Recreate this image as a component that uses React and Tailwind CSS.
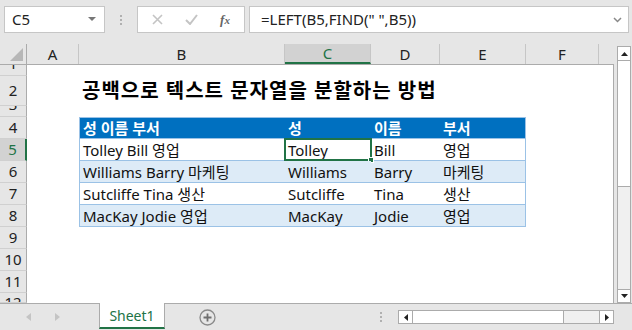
import React from 'react';

const FONT = { fontFamily: '"Noto Sans", "Noto Sans CJK KR", sans-serif' };

const rowHeights = [11, 30, 11, 22, 22, 22, 22, 22, 22, 22, 22, 10];

const tableRows = [
    ['Tolley Bill 영업', 'Tolley', 'Bill', '영업'],
    ['Williams Barry 마케팅', 'Williams', 'Barry', '마케팅'],
    ['Sutcliffe Tina 생산', 'Sutcliffe', 'Tina', '생산'],
    ['MacKay Jodie 영업', 'MacKay', 'Jodie', '영업'],
];

const COLS = 'grid grid-cols-[27px_52px_206px_86px_69px_86px_73px_1fr] grid-rows-[100%]';

const FormulaBar = () => (
    <div className="h-[44px] bg-[#e6e6e6] flex items-start pt-[6px] pl-[4px] pr-[3px]">
        <div className="w-[101px] h-[27px] bg-white border border-[#c6c6c6] flex items-center justify-between pl-[7px] pr-[8px]">
            <span className="text-[15px] text-[#222]">C5</span>
            <svg width="8" height="5" viewBox="0 0 8 5"><path d="M0 0h8L4 4z" fill="#777" /></svg>
        </div>
        <div className="w-[32px] h-[27px] flex flex-col items-center justify-center gap-[2px]">
            <span className="w-[2px] h-[2px] bg-[#b0b0b0]" />
            <span className="w-[2px] h-[2px] bg-[#b0b0b0]" />
            <span className="w-[2px] h-[2px] bg-[#b0b0b0]" />
        </div>
        <div className="w-[108px] h-[27px] bg-white border border-[#c6c6c6] flex items-center">
            <div className="w-[38px] flex justify-center">
                <svg width="11" height="11" viewBox="0 0 11 11"><path d="M1 1l9 9M10 1l-9 9" stroke="#c4c4c4" strokeWidth="1.6" /></svg>
            </div>
            <div className="w-[30px] flex justify-center">
                <svg width="13" height="11" viewBox="0 0 13 11"><path d="M1 6l4 4 7-9" stroke="#c4c4c4" strokeWidth="2" fill="none" /></svg>
            </div>
            <div className="w-[38px] flex justify-center">
                <span className="text-[13px] italic font-bold text-[#666]" style={{ fontFamily: '"Liberation Serif", serif' }}>f<span className="text-[11px]">x</span></span>
            </div>
        </div>
        <div className="w-[4px]" />
        <div className="flex-1 h-[27px] bg-white border border-[#c6c6c6] flex items-center justify-between pl-[11px] pr-[6px]">
            <span className="text-[15px] text-[#222]">=LEFT(B5,FIND(" ",B5))</span>
            <svg width="9" height="6" viewBox="0 0 9 6"><path d="M1 1l3.5 3.5L8 1" stroke="#888" strokeWidth="1.5" fill="none" /></svg>
        </div>
    </div>
);

const ColumnHeaders = () => (
    <div className={`${COLS} h-[21px] shrink-0 bg-[#e6e6e6] text-[15px] leading-[20px] text-[#222] border-b border-[#ababab]`}>
        <div className="border-r border-[#ababab] flex items-end justify-end p-[3px]">
            <svg width="13" height="13" viewBox="0 0 13 13"><path d="M13 0v13H0z" fill="#b7b7b7" /></svg>
        </div>
        {['A', 'B', 'C', 'D', 'E', 'F'].map((c) => (
            <div
                key={c}
                className={`flex items-center justify-center border-r border-[#c6c6c6] ${c === 'C' ? 'bg-[#d2d2d2] text-[#217346] border-b-2 border-b-[#217346]' : ''}`}
            >
                {c}
            </div>
        ))}
        <div />
    </div>
);

const Cell = ({ children, className = '' }) => (
    <div className={`flex items-center pl-[3px] whitespace-nowrap overflow-visible ${className}`}>{children}</div>
);

const SheetRow = ({ index, height }) => {
    const n = index + 1;
    const selected = n === 5;
    const header = n === 4;
    const data = n >= 5 && n <= 8 ? tableRows[n - 5] : null;
    const banded = n === 6 || n === 8;
    const inTable = n >= 4 && n <= 8;
    const tBg = header ? 'bg-[#0070c0] text-white font-bold' : banded ? 'bg-[#ddebf7]' : 'bg-white';
    const tBorder = inTable ? `border-b border-[#9bc2e6] ${header ? 'border-t' : ''}` : '';

    return (
        <div className={`${COLS} shrink-0 text-[15px] leading-[20px] text-[#111]`} style={{ height }}>
            <div
                className={`flex items-center justify-center overflow-hidden leading-none border-b border-[#d0d0d0] ${selected ? 'bg-[#d2d2d2] text-[#217346] border-r-2 border-r-[#217346]' : 'bg-[#e6e6e6] text-[#222] border-r border-r-[#ababab]'}`}
            >
                <span className={n === 1 || n === 3 ? 'text-[15px] -mt-[14px]' : n === 12 ? 'text-[15px] mt-[10px]' : 'text-[15px]'}>{n}</span>
            </div>
            <div className="bg-white" />
            {n === 2 && (
                <Cell className="col-span-4 bg-white text-[20px] leading-[28px] tracking-[1px] font-bold text-black">공백으로 텍스트 문자열을 분할하는 방법</Cell>
            )}
            {inTable && (
                <>
                    <Cell className={`${tBg} ${tBorder} border-l border-l-[#9bc2e6]`}>{header ? '성 이름 부서' : data[0]}</Cell>
                    <Cell className={`${tBg} ${tBorder} relative`}>
                        {header ? '성' : data[1]}
                        {selected && (
                            <div className="absolute -top-[1px] -left-[1px] right-[-1px] bottom-[-1px] border-2 border-[#217346]">
                                <div className="absolute -right-[4px] -bottom-[4px] w-[6px] h-[6px] bg-[#217346] border border-white" />
                            </div>
                        )}
                    </Cell>
                    <Cell className={`${tBg} ${tBorder}`}>{header ? '이름' : data[2]}</Cell>
                    <Cell className={`${tBg} ${tBorder} border-r border-r-[#9bc2e6]`}>{header ? '부서' : data[3]}</Cell>
                </>
            )}
            {!inTable && n !== 2 && <div className="col-span-4 bg-white" />}
            <div className="bg-white" />
            <div className="bg-white border-r border-[#ababab]" />
        </div>
    );
};

const VerticalScroll = () => (
    <div className="w-[18px] bg-[#e6e6e6] pl-[3px] pr-[1px] pt-[2px] flex flex-col">
        <div className="flex-1 flex flex-col border border-[#ababab] bg-[#f0f0f0]">
            <div className="h-[14px] bg-white border-b border-[#ababab] flex items-center justify-center">
                <svg width="7" height="4" viewBox="0 0 7 4"><path d="M0 4h7L3.5 0z" fill="#222" /></svg>
            </div>
            <div className="h-[126px] bg-white border-b border-[#ababab]" />
            <div className="flex-1" />
            <div className="h-[13px] bg-white border-t border-[#ababab] flex items-center justify-center">
                <svg width="7" height="4" viewBox="0 0 7 4"><path d="M0 0h7L3.5 4z" fill="#222" /></svg>
            </div>
        </div>
    </div>
);

const BottomBar = () => (
    <div className="h-[27px] bg-[#e6e6e6] border-t border-[#ababab] flex items-start">
        <div className="w-[99px] h-full flex items-center">
            <svg className="ml-[26px]" width="5" height="8" viewBox="0 0 5 8"><path d="M5 0v8L0 4z" fill="#c4c4c4" /></svg>
            <svg className="ml-[24px]" width="5" height="8" viewBox="0 0 5 8"><path d="M0 0v8l5-4z" fill="#c4c4c4" /></svg>
        </div>
        <div className="w-[66px] h-[26px] -mt-[1px] bg-white border-x border-[#ababab] border-b-2 border-b-[#217346] flex items-center justify-center text-[14px] text-[#217346]">
            Sheet1
        </div>
        <div className="w-[84px] h-full flex items-center justify-center">
            <svg width="17" height="17" viewBox="0 0 17 17">
                <circle cx="8.5" cy="8.5" r="7.5" fill="none" stroke="#8a8a8a" strokeWidth="1.3" />
                <path d="M8.5 4.5v8M4.5 8.5h8" stroke="#6f6f6f" strokeWidth="1.8" />
            </svg>
        </div>
        <div className="flex-1 h-full flex items-center justify-end pr-[18px]">
            <div className="flex flex-col gap-[2px] mr-[16px]">
                <span className="w-[2px] h-[2px] bg-[#b0b0b0]" />
                <span className="w-[2px] h-[2px] bg-[#b0b0b0]" />
                <span className="w-[2px] h-[2px] bg-[#b0b0b0]" />
            </div>
            <div className="w-[216px] h-[14px] border border-[#ababab] bg-[#f0f0f0] flex">
                <div className="w-[14px] bg-white border-r border-[#ababab] flex items-center justify-center">
                    <svg width="4" height="7" viewBox="0 0 4 7"><path d="M4 0v7L0 3.5z" fill="#222" /></svg>
                </div>
                <div className="w-[151px] bg-white border-r border-[#ababab]" />
                <div className="flex-1" />
                <div className="w-[14px] bg-white border-l border-[#ababab] flex items-center justify-center">
                    <svg width="4" height="7" viewBox="0 0 4 7"><path d="M0 0v7l4-3.5z" fill="#222" /></svg>
                </div>
            </div>
        </div>
    </div>
);

export default function App() {
    return (
        <div className="w-[632px] h-[330px] overflow-hidden bg-[#e6e6e6] flex flex-col" style={FONT}>
            <FormulaBar />
            <div className="flex h-[259px]">
                <div className="w-[614px] flex flex-col overflow-hidden">
                    <ColumnHeaders />
                    {rowHeights.map((h, i) => (
                        <SheetRow key={i} index={i} height={h} />
                    ))}
                </div>
                <VerticalScroll />
            </div>
            <BottomBar />
        </div>
    );
}
